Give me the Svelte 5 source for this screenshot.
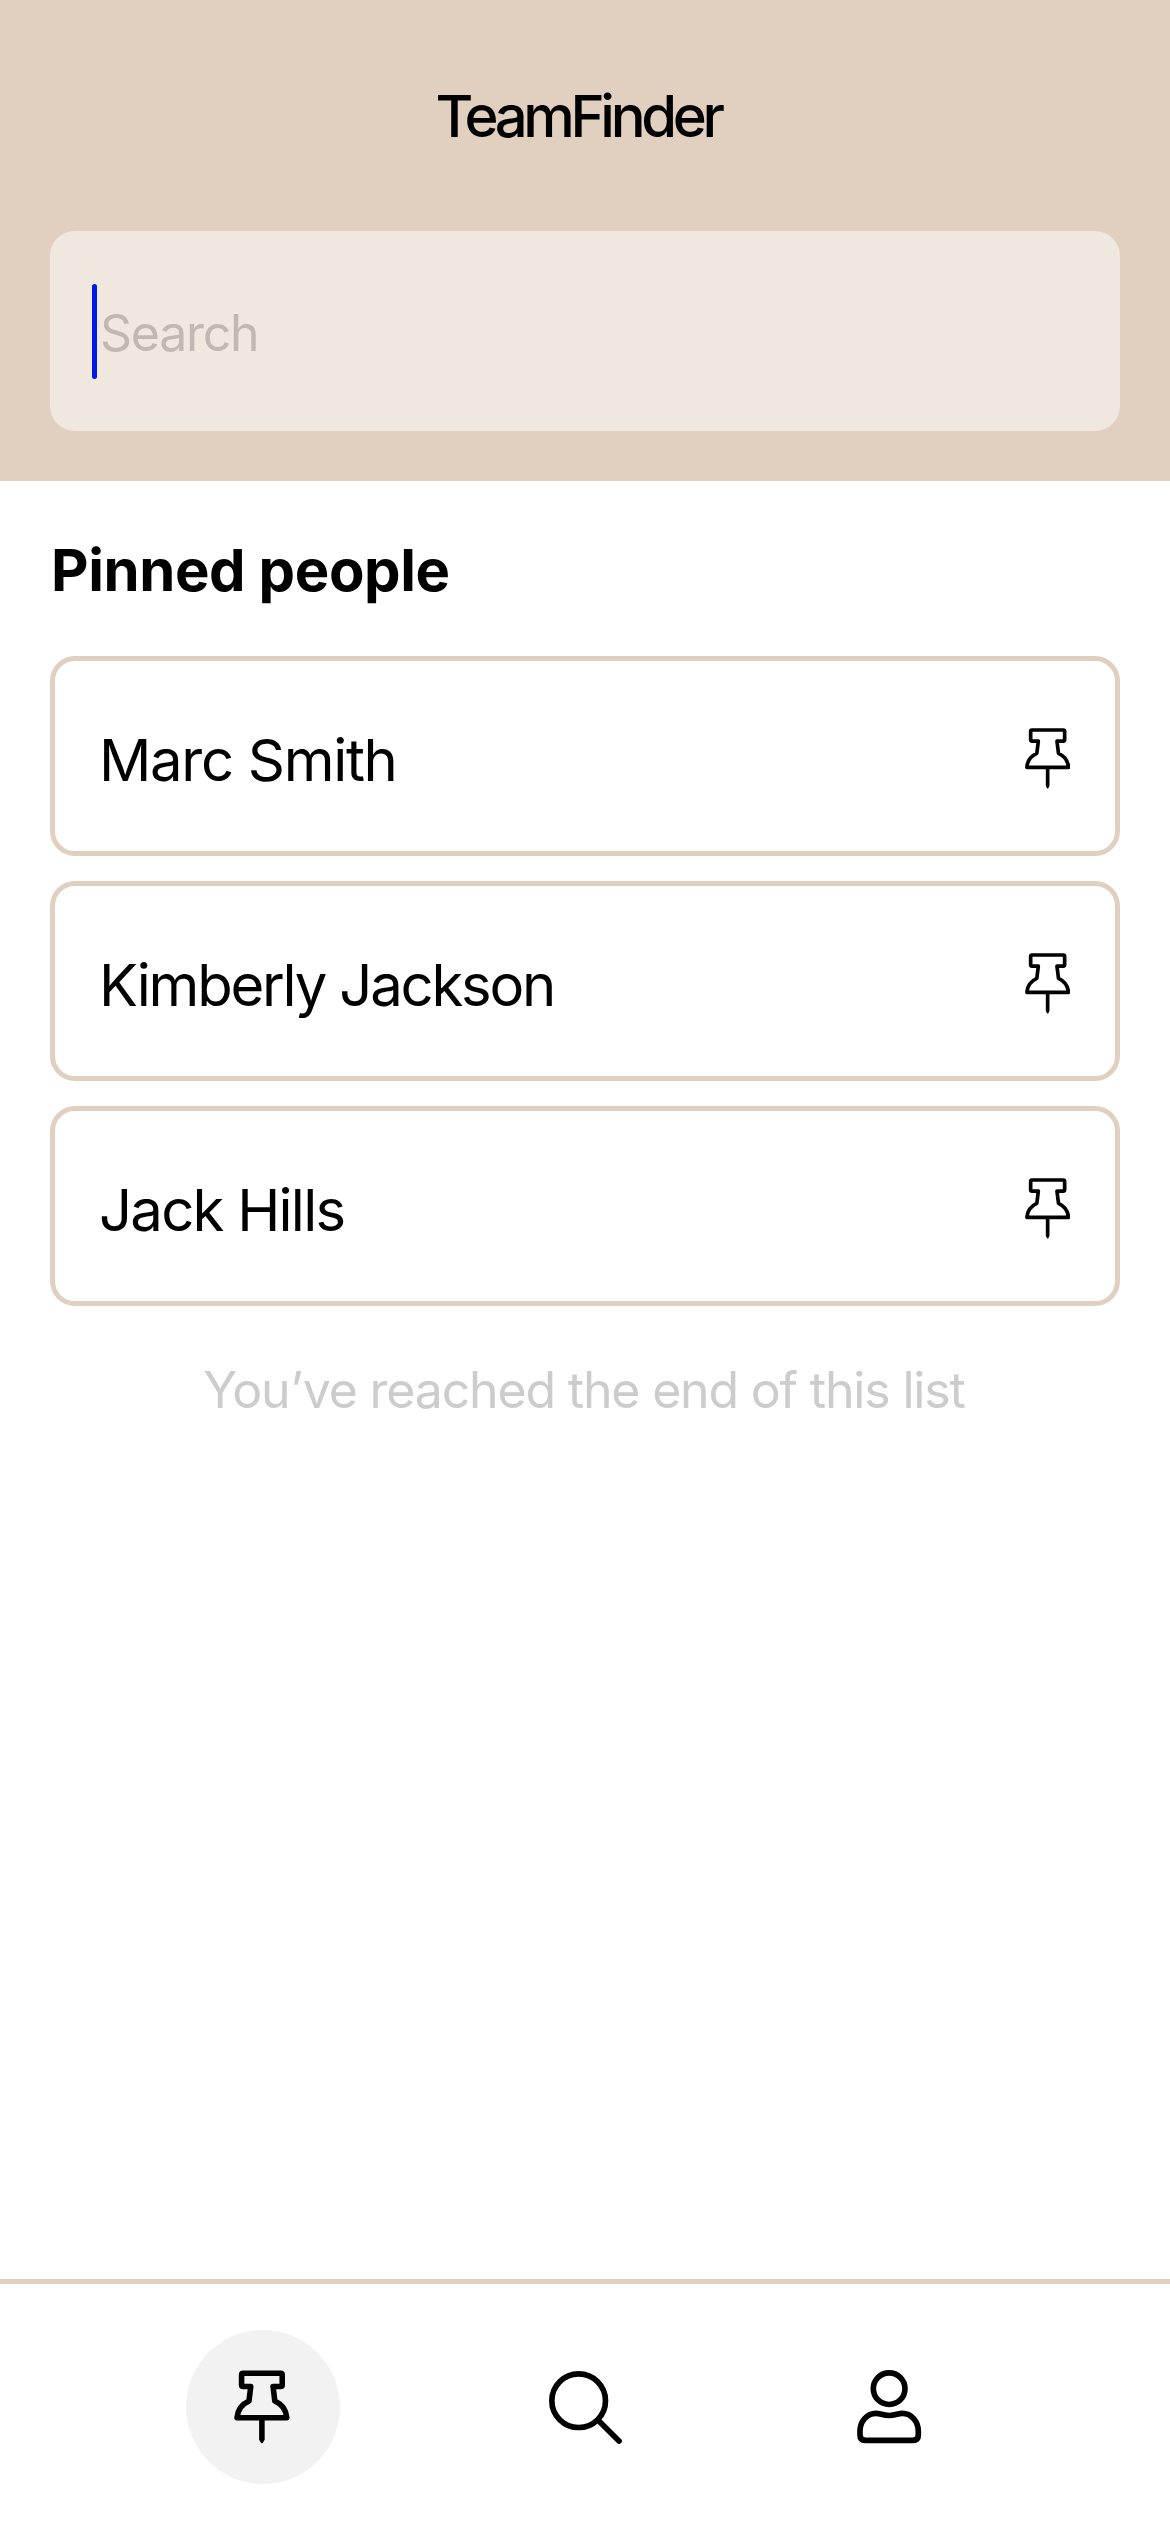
<script>
  const people = [
    { name: 'Marc Smith', tone: 'regular' },
    { name: 'Kimberly Jackson', tone: 'tight' },
    { name: 'Jack Hills', tone: 'snug' },
  ];
  let query = $state('');
</script>

{#snippet pin(weight)}
  <path
    d="M-28 33.5H-47q-4 0-4-4V4q0-4 4-4H47q4 0 4 4V29.500q0 4-4 4H28L32.500 70C50 78 61 92 62.500 112H-62.500C-61 92-50 78-32.500 70L-28 33.500Z"
    fill="none" stroke="currentColor" stroke-width={weight} stroke-linejoin="round" />
  <path
    d="M{-weight / 2} 112V167L-2 175Q0 177 2 175L{weight / 2} 167V112Z"
    fill="currentColor" />
{/snippet}

<div class="screen">
  <header>
    <h1>TeamFinder</h1>
    <label class="search">
      <span class="caret"></span>
      <input type="text" placeholder="Search" aria-label="Search" bind:value={query} />
    </label>
  </header>

  <main>
    <h2>Pinned people</h2>
    <ul>
      {#each people as person}
        <li>
          <span class="name {person.tone}">{person.name}</span>
          <svg class="pin" viewBox="-68 -6 136 184" aria-hidden="true">{@render pin(11)}</svg>
        </li>
      {/each}
    </ul>
    <p class="end">You’ve reached the end of this list</p>
  </main>

  <nav>
    <button class="active" aria-label="Pinned">
      <svg class="pin-large" viewBox="-70 -8 140 188">{@render pin(14)}</svg>
    </button>
    <button class="find" aria-label="Search">
      <svg class="glass" viewBox="86 91 219 219" fill="none" stroke="currentColor" stroke-width="17" stroke-linecap="round">
        <circle cx="175" cy="180" r="80.500" />
        <path d="M235 240L296 301" />
      </svg>
    </button>
    <button class="profile" aria-label="Profile">
      <svg class="person" viewBox="82 91 193 220" fill="none" stroke="currentColor" stroke-width="17">
        <circle cx="178.500" cy="147" r="47.500" />
        <path d="M107 302q-16 0-16-16V274C91 245 112 221 139 221C152 221 160 227.500 178.500 227.500C197 227.500 205 221 218 221C245 221 266 245 266 274V286q0 16-16 16Z" />
      </svg>
    </button>
  </nav>
</div>

<style>
  :global(body) {
    margin: 0;
    background: #fff;
  }

  .screen {
    display: flex;
    flex-direction: column;
    box-sizing: border-box;
    width: 1170px;
    height: 2532px;
    color: #000;
    background: #fff;
    font-family: Inter, 'Liberation Sans', sans-serif;
  }

  header {
    box-sizing: border-box;
    height: 481px;
    padding: 76px 50px 50px;
    background: #e1d0c0;
  }

  h1 {
    margin: 0 0 75px;
    padding-right: 14px;
    text-align: center;
    font-size: 58px;
    font-weight: 500;
    line-height: 80px;
    letter-spacing: -4.33px;
  }

  .search {
    display: flex;
    align-items: center;
    box-sizing: border-box;
    height: 200px;
    padding: 0 42px;
    border-radius: 25px;
    background: #f0e7de;
  }

  .caret {
    width: 5px;
    height: 95px;
    margin-right: 3px;
    border-radius: 2.5px;
    background: #0019e6;
  }

  input {
    flex: 1;
    min-width: 0;
    height: 80px;
    padding: 4px 0 0;
    border: 0;
    outline: 0;
    background: transparent;
    font: 400 50px/76px Inter, 'Liberation Sans', sans-serif;
    letter-spacing: -1.28px;
  }

  input::placeholder {
    color: #c0b8b2;
    opacity: 1;
  }

  main {
    flex: 1;
    padding: 54px 50px 0;
  }

  h2 {
    margin: 0 0 51px;
    padding-left: 1px;
    font-size: 58px;
    font-weight: 700;
    line-height: 70px;
    letter-spacing: -0.4px;
  }

  ul {
    display: grid;
    gap: 25px;
    margin: 0;
    padding: 0;
    list-style: none;
  }

  li {
    display: flex;
    align-items: center;
    justify-content: space-between;
    box-sizing: border-box;
    height: 200px;
    padding: 0 45px 0 44px;
    border: 5px solid #e1d0c0;
    border-radius: 25px;
  }

  .name {
    padding-top: 8px;
    font-size: 58px;
    line-height: 80px;
  }

  .regular {
    letter-spacing: -1.3px;
  }

  .tight {
    letter-spacing: -2.2px;
  }

  .snug {
    letter-spacing: -1.75px;
  }

  .pin {
    width: 45.3px;
    height: 61.3px;
    padding-top: 5px;
  }

  .end {
    margin: 54px 0 0;
    padding-right: 2px;
    text-align: center;
    color: #ccc;
    font-size: 50px;
    line-height: 60px;
    letter-spacing: -1.18px;
  }

  nav {
    display: flex;
    box-sizing: border-box;
    height: 253px;
    padding: 46px 0 0 186px;
    border-top: 5px solid #e1d0c0;
  }

  button {
    display: flex;
    align-items: center;
    justify-content: center;
    width: 154px;
    height: 154px;
    padding: 0;
    border: 0;
    border-radius: 50%;
    color: inherit;
    background: transparent;
  }

  .active {
    background: #f2f2f2;
  }

  .find {
    margin-left: 168px;
  }

  .profile {
    margin-left: 150.5px;
  }

  .pin-large {
    width: 55.8px;
    height: 74.9px;
    margin-right: 2px;
  }

  .glass {
    width: 73px;
    height: 73px;
  }

  .person {
    width: 64.3px;
    height: 73.3px;
  }
</style>
